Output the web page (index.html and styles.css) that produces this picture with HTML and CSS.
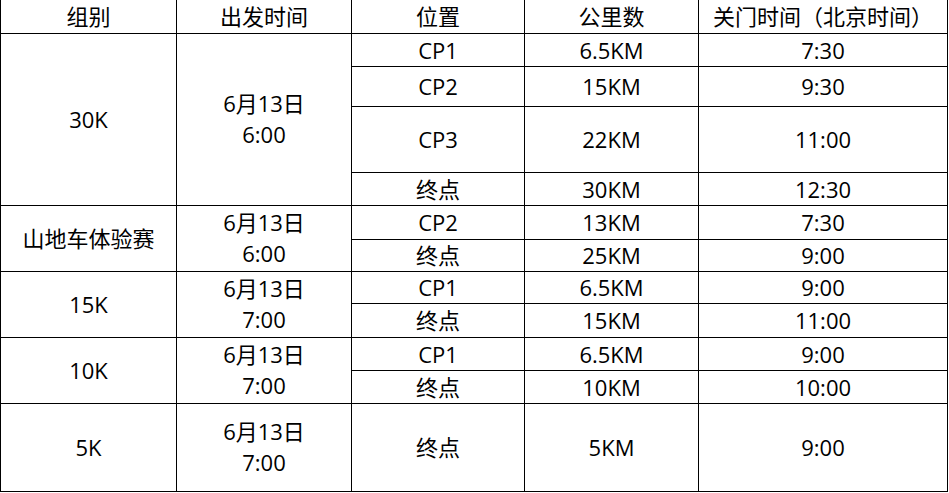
FILE: index.html
```html
<!DOCTYPE html>
<html lang="zh-CN">
<head>
<meta charset="utf-8">
<title>关门时间</title>
<link rel="stylesheet" href="styles.css">
</head>
<body>
<table class="cutoff">
  <colgroup>
    <col class="c1"><col class="c2"><col class="c3"><col class="c4"><col class="c5">
  </colgroup>
  <tr class="h33 head">
    <td>组别</td><td>出发时间</td><td>位置</td><td>公里数</td><td>关门时间（北京时间）</td>
  </tr>
  <tr class="h33">
    <td rowspan="4">30K</td><td rowspan="4" class="two">6月13日<br>6:00</td><td>CP1</td><td>6.5KM</td><td>7:30</td>
  </tr>
  <tr class="h40">
    <td>CP2</td><td>15KM</td><td>9:30</td>
  </tr>
  <tr class="h66">
    <td>CP3</td><td>22KM</td><td>11:00</td>
  </tr>
  <tr class="h33">
    <td>终点</td><td>30KM</td><td>12:30</td>
  </tr>
  <tr class="h34">
    <td rowspan="2">山地车体验赛</td><td rowspan="2" class="two">6月13日<br>6:00</td><td>CP2</td><td>13KM</td><td>7:30</td>
  </tr>
  <tr class="h32">
    <td>终点</td><td>25KM</td><td>9:00</td>
  </tr>
  <tr class="h32">
    <td rowspan="2">15K</td><td rowspan="2" class="two">6月13日<br>7:00</td><td>CP1</td><td>6.5KM</td><td>9:00</td>
  </tr>
  <tr class="h34">
    <td>终点</td><td>15KM</td><td>11:00</td>
  </tr>
  <tr class="h33">
    <td rowspan="2">10K</td><td rowspan="2" class="two">6月13日<br>7:00</td><td>CP1</td><td>6.5KM</td><td>9:00</td>
  </tr>
  <tr class="h33">
    <td>终点</td><td>10KM</td><td>10:00</td>
  </tr>
  <tr class="h88">
    <td>5K</td><td class="two">6月13日<br>7:00</td><td>终点</td><td>5KM</td><td>9:00</td>
  </tr>
</table>
</body>
</html>
```
FILE: styles.css
```css
html, body {
  margin: 0;
  padding: 0;
  background: #fff;
}
.cutoff {
  border-collapse: collapse;
  table-layout: fixed;
  width: 948px;
  font-family: "Open Sans", "Noto Sans CJK SC", sans-serif;
  font-size: 22px;
  color: #000;
}
.c1 { width: 176px; }
.c2 { width: 175px; }
.c3 { width: 173px; }
.c4 { width: 174px; }
.c5 { width: 249px; }
.cutoff td {
  border: 1px solid #000;
  padding: 0;
  text-align: center;
  vertical-align: middle;
  line-height: 26px;
}
.cutoff td.two { line-height: 31.5px; }
.head td { border-top: none; }
.h32 { height: 32px; }
.h33 { height: 33px; }
.h34 { height: 34px; }
.h40 { height: 40px; }
.h66 { height: 66px; }
.h88 { height: 88px; }
```
